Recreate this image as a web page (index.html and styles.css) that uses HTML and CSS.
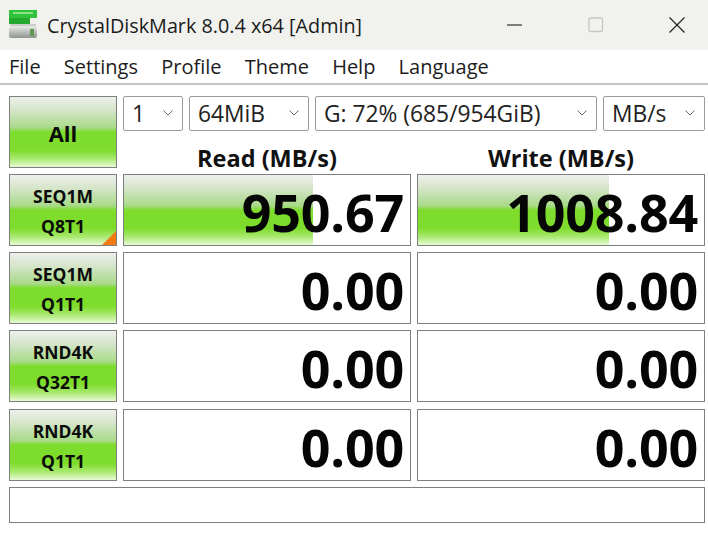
FILE: index.html
```html
<!DOCTYPE html>
<html lang="en">
<head>
<meta charset="utf-8">
<title>CrystalDiskMark 8.0.4 x64 [Admin]</title>
<link rel="stylesheet" href="styles.css">
</head>
<body>
<header class="titlebar">
  <svg class="app-icon" width="28" height="28" viewBox="0 0 28 28" aria-hidden="true">
    <defs>
      <linearGradient id="disk" x1="0" y1="0" x2="0" y2="1"><stop offset="0" stop-color="#e8eae6"/><stop offset="1" stop-color="#8f9490"/></linearGradient>
    </defs>
    <rect x="0" y="0" width="28" height="8" fill="#2fc23a"/>
    <rect x="4" y="2" width="20" height="2" fill="#86e486"/>
    <rect x="0" y="8" width="21" height="6" fill="#22a92e"/>
    <rect x="1" y="14" width="26" height="2" fill="#c9ccc7"/>
    <rect x="0" y="16" width="28" height="12" rx="2" fill="url(#disk)"/>
    <rect x="21" y="19" width="4" height="7" fill="#5f9a50"/>
  </svg>
  <span class="app-title">CrystalDiskMark 8.0.4 x64 [Admin]</span>
  <div class="win-controls">
    <span class="win-btn"><svg width="16" height="16" viewBox="0 0 16 16"><path d="M0 8H15" stroke="#222" stroke-width="1.1"/></svg></span>
    <span class="win-btn"><svg width="16" height="16" viewBox="0 0 16 16"><rect x="1" y="1" width="13.5" height="13.5" rx="1.5" fill="none" stroke="#c6c7c4" stroke-width="1.3"/></svg></span>
    <span class="win-btn"><svg width="16" height="16" viewBox="0 0 16 16"><path d="M0.5 0.5L15.5 15.5M15.5 0.5L0.5 15.5" stroke="#222" stroke-width="1.2"/></svg></span>
  </div>
</header>
<nav class="menubar">
  <span>File</span><span>Settings</span><span>Profile</span><span>Theme</span><span>Help</span><span>Language</span>
</nav>
<main class="board">
  <button class="test-btn all-btn">All</button>
  <div class="selects">
    <div class="select s-count">1<svg class="chev" width="10" height="6" viewBox="0 0 10 6"><path d="M.5.5L5 5 9.500.5" fill="none" stroke="#666"/></svg></div>
    <div class="select s-size">64MiB<svg class="chev" width="10" height="6" viewBox="0 0 10 6"><path d="M.5.5L5 5 9.500.5" fill="none" stroke="#666"/></svg></div>
    <div class="select s-drive">G: 72% (685/954GiB)<svg class="chev" width="10" height="6" viewBox="0 0 10 6"><path d="M.5.5L5 5 9.500.5" fill="none" stroke="#666"/></svg></div>
    <div class="select s-unit">MB/s<svg class="chev" width="10" height="6" viewBox="0 0 10 6"><path d="M.5.5L5 5 9.500.5" fill="none" stroke="#666"/></svg></div>
  </div>
  <div class="col-head">Read (MB/s)</div>
  <div class="col-head">Write (MB/s)</div>

  <button class="test-btn row-btn flagged">SEQ1M<br>Q8T1</button>
  <div class="result"><div class="bar" style="width:66%"></div><span class="num">950.67</span></div>
  <div class="result"><div class="bar" style="width:66.800%"></div><span class="num">1008.84</span></div>

  <button class="test-btn row-btn">SEQ1M<br>Q1T1</button>
  <div class="result"><span class="num">0.00</span></div>
  <div class="result"><span class="num">0.00</span></div>

  <button class="test-btn row-btn">RND4K<br>Q32T1</button>
  <div class="result"><span class="num">0.00</span></div>
  <div class="result"><span class="num">0.00</span></div>

  <button class="test-btn row-btn shift">RND4K<br>Q1T1</button>
  <div class="result shift"><span class="num">0.00</span></div>
  <div class="result shift"><span class="num">0.00</span></div>

  <div class="comment"></div>
</main>
</body>
</html>
```
FILE: styles.css
```css
* { box-sizing: border-box; }
html, body { margin: 0; padding: 0; }
body {
  width: 708px;
  height: 533px;
  overflow: hidden;
  background: #fff;
  color: #111;
  font-family: "Open Sans", "Noto Sans", sans-serif;
}
.titlebar {
  height: 50px;
  background: #f1f2ee;
  display: flex;
  align-items: center;
  padding-left: 9px;
}
.app-icon { flex: none; margin-right: 10px; margin-top: -2px; }
.app-title { font-size: 19.800px; color: #1a1a1a; white-space: nowrap; margin-top: 1px; }
.win-controls { margin-left: auto; display: flex; padding-right: 23px; gap: 65px; margin-top: -1px; }
.win-btn { display: block; width: 16px; height: 16px; }
.win-btn svg { display: block; }
.menubar {
  height: 35px;
  border-bottom: 2px solid #c4c6c4;
  display: flex;
  gap: 23.200px;
  padding: 0 0 0 9px;
  align-items: center;
  font-size: 20px;
  color: #1c1c1c;
  background: #fff;
}
.board {
  display: grid;
  grid-template-columns: 108px 288px 288px;
  grid-template-rows: 35px 31px repeat(4, 72px) 36px;
  column-gap: 6px;
  row-gap: 6px;
  padding: 11px 0 0 9px;
}
.test-btn {
  border: 1px solid #7d807c;
  padding: 0;
  margin: 0;
  color: #0b0b0b;
  font-family: inherit;
  font-weight: 700;
  background: linear-gradient(to bottom, #eef0ec 0%, #d6e5cb 18%, #a8da88 44%, #7edc2c 50%, #7edc2c 76%, #a8e96e 88%, #e8fad6 100%);
}
.all-btn { grid-row: 1 / span 2; font-size: 22px; padding-top: 2px; }
.row-btn { font-size: 17.500px; line-height: 30px; position: relative; padding-top: 1px; }
.flagged::after {
  content: "";
  position: absolute;
  right: 0;
  bottom: 0;
  border-style: solid;
  border-width: 0 0 14px 14px;
  border-color: transparent transparent #f47a14 transparent;
}
.selects {
  grid-column: 2 / span 2;
  display: flex;
  gap: 6px;
  height: 35px;
}
.select {
  border: 1px solid #9a9c9a;
  border-radius: 2px;
  background: #fff;
  font-size: 22.800px;
  color: #222;
  display: flex;
  align-items: center;
  padding-left: 8px;
  position: relative;
  white-space: nowrap;
}
.chev { position: absolute; right: 9px; top: 13px; }
.s-count { width: 60px; }
.s-size { width: 120px; }
.s-drive { width: 282px; }
.s-unit { width: 102px; }
.col-head {
  font-size: 23.500px;
  font-weight: 700;
  text-align: center;
  line-height: 42px;
  height: 31px;
  color: #111;
  white-space: nowrap;
}
.result {
  border: 1px solid #7d807c;
  background: #fff;
  position: relative;
  display: flex;
  align-items: center;
  justify-content: flex-end;
  overflow: hidden;
}
.bar {
  position: absolute;
  left: 0;
  top: 0;
  bottom: 0;
  background: linear-gradient(to bottom, #eef0ec 0%, #d6e5cb 18%, #a8da88 44%, #7edc2c 50%, #7edc2c 76%, #a8e96e 88%, #e8fad6 100%);
}
.num {
  position: relative;
  font-size: 52px;
  font-weight: 700;
  line-height: 70px;
  letter-spacing: -0.200px;
  color: #050505;
  padding-right: 6px;
  padding-top: 4px;
}
.shift { margin-top: 1px; margin-bottom: -1px; }
.comment {
  grid-column: 1 / span 3;
  border: 1px solid #7d807c;
  margin-top: 1px;
  height: 36px;
}
```
